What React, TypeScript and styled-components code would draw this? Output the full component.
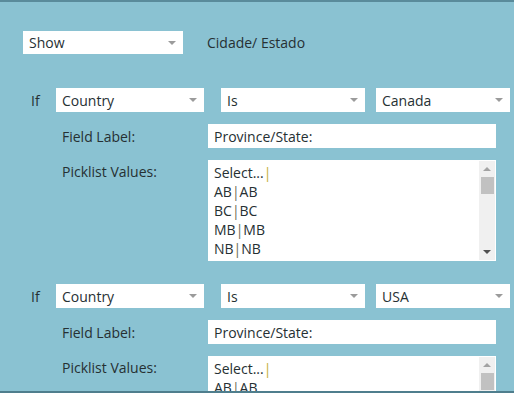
import React from "react";
import styled, { createGlobalStyle } from "styled-components";

const Global = createGlobalStyle`
  html, body { margin: 0; padding: 0; }
  body { font-family: "Open Sans", "Liberation Sans", sans-serif; background: #8ac2d2; }
`;

const Frame = styled.div`
  box-sizing: border-box;
  width: 514px;
  height: 393px;
  overflow: hidden;
  background: #8ac2d2;
  border-top: 2px solid #5a8b9b;
  border-bottom: 2px solid #4f7e8d;
  padding-top: 29px;
  color: #263033;
  font-size: 14px;
`;

const TopRow = styled.div`
  display: flex;
  align-items: center;
  gap: 24px;
  padding-left: 23px;
`;

const SelectBox = styled.div<{ $w: number; $h?: number }>`
  box-sizing: border-box;
  width: ${(p) => p.$w}px;
  height: ${(p) => p.$h ?? 24}px;
  background: #fff;
  display: flex;
  align-items: center;
  justify-content: space-between;
  padding: 0 7px 0 6px;
  flex-shrink: 0;
`;

const Arrow = styled.span`
  width: 0;
  height: 0;
  border-left: 4px solid transparent;
  border-right: 4px solid transparent;
  border-top: 4px solid #9b9b9b;
`;

const Text = styled.span`
  white-space: nowrap;
`;

const Rule = styled.div<{ $top: number }>`
  margin-top: ${(p) => p.$top}px;
  display: flex;
  flex-direction: column;
  gap: 12px;
`;

const IfRow = styled.div`
  display: flex;
  align-items: center;
  padding-left: 31px;
`;

const IfLabel = styled.span`
  width: 25px;
`;

const Gap = styled.span<{ $w: number }>`
  width: ${(p) => p.$w}px;
  flex-shrink: 0;
`;

const FieldRow = styled.div<{ $top?: boolean }>`
  display: flex;
  align-items: ${(p) => (p.$top ? "flex-start" : "center")};
  padding-left: 62px;
`;

const FieldLabel = styled.span<{ $pad?: number }>`
  width: 146px;
  flex-shrink: 0;
  padding-top: ${(p) => p.$pad ?? 0}px;
`;

const Input = styled.div`
  box-sizing: border-box;
  width: 288px;
  height: 24px;
  background: #fff;
  display: flex;
  align-items: center;
  padding-left: 6px;
`;

const ListBox = styled.div`
  box-sizing: border-box;
  width: 288px;
  height: 101px;
  background: #fff;
  display: flex;
  overflow: hidden;
  flex-shrink: 0;
`;

const Lines = styled.div`
  flex: 1;
  padding: 3px 6px;
  line-height: 19px;
`;

const Line = styled.div`
  white-space: nowrap;
`;

const Pipe = styled.span<{ $caret?: boolean }>`
  color: ${(p) => (p.$caret ? "#c3ad3c" : "#6b6a55")};
`;

const Track = styled.div`
  width: 16px;
  margin: 1px 1px 1px 0;
  background: #f0f0f0;
  display: flex;
  flex-direction: column;
  align-items: center;
`;

const UpArrow = styled.span`
  margin-top: 6px;
  width: 0;
  height: 0;
  border-left: 4px solid transparent;
  border-right: 4px solid transparent;
  border-bottom: 4px solid #a3a3a3;
`;

const Thumb = styled.div`
  margin-top: 6px;
  width: 13px;
  height: 17px;
  background: #c1c1c1;
`;

const Spacer = styled.div`
  flex: 1;
`;

const DownArrow = styled.span`
  margin-bottom: 6px;
  width: 0;
  height: 0;
  border-left: 4px solid transparent;
  border-right: 4px solid transparent;
  border-top: 4px solid #505050;
`;

function Select({ w, h, label }: { w: number; h?: number; label: string }) {
  return (
    <SelectBox $w={w} $h={h}>
      <Text>{label}</Text>
      <Arrow />
    </SelectBox>
  );
}

function RuleBlock({ top, value, lines }: { top: number; value: string; lines: string[] }) {
  return (
    <Rule $top={top}>
      <IfRow>
        <IfLabel>If</IfLabel>
        <Select w={148} label="Country" />
        <Gap $w={17} />
        <Select w={144} label="Is" />
        <Gap $w={11} />
        <Select w={134} label={value} />
      </IfRow>
      <FieldRow>
        <FieldLabel>Field Label:</FieldLabel>
        <Input>Province/State:</Input>
      </FieldRow>
      <FieldRow $top>
        <FieldLabel $pad={2}>Picklist Values:</FieldLabel>
        <ListBox>
          <Lines>
            <Line>
              Select...<Pipe $caret>|</Pipe>
            </Line>
            {lines.map((v) => (
              <Line key={v}>
                {v}
                <Pipe>|</Pipe>
                {v}
              </Line>
            ))}
          </Lines>
          <Track>
            <UpArrow />
            <Thumb />
            <Spacer />
            <DownArrow />
          </Track>
        </ListBox>
      </FieldRow>
    </Rule>
  );
}

export default function App() {
  return (
    <>
      <Global />
      <Frame>
        <TopRow>
          <Select w={160} h={23} label="Show" />
          <Text>Cidade/ Estado</Text>
        </TopRow>
        <RuleBlock top={34} value="Canada" lines={["AB", "BC", "MB", "NB"]} />
        <RuleBlock top={23} value="USA" lines={["AB"]} />
      </Frame>
    </>
  );
}
